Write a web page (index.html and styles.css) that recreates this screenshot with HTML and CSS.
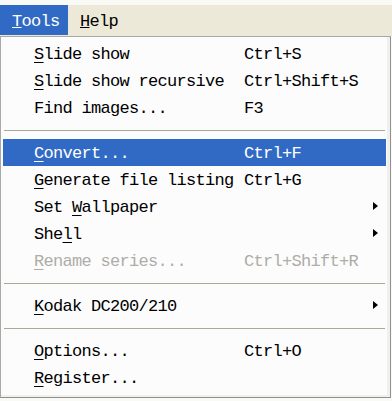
FILE: index.html
```
<!DOCTYPE html>
<html lang="en">
<head>
  <meta charset="UTF-8" />
  <title>Tools menu</title>
  <link rel="stylesheet" href="styles.css">
</head>
<body>
  <div class="menubar">
    <span class="menubar-item open"><u>T</u>ools</span>
    <span class="menubar-item"><u>H</u>elp</span>
  </div>

  <div class="menu">
    <div class="item"><span class="label"><u>S</u>lide show</span><span class="key">Ctrl+S</span></div>
    <div class="item"><span class="label"><u>S</u>lide show recursive</span><span class="key">Ctrl+Shift+S</span></div>
    <div class="item"><span class="label">Find images...</span><span class="key">F3</span></div>
    <div class="sep"></div>
    <div class="item selected"><span class="label"><u>C</u>onvert...</span><span class="key">Ctrl+F</span></div>
    <div class="item"><span class="label"><u>G</u>enerate file listing</span><span class="key">Ctrl+G</span></div>
    <div class="item sub"><span class="label">Set <u>W</u>allpaper</span><span class="key"></span></div>
    <div class="item sub"><span class="label">She<u>l</u>l</span><span class="key"></span></div>
    <div class="item disabled"><span class="label"><u>R</u>ename series...</span><span class="key">Ctrl+Shift+R</span></div>
    <div class="sep"></div>
    <div class="item sub"><span class="label"><u>K</u>odak DC200/210</span><span class="key"></span></div>
    <div class="sep"></div>
    <div class="item"><span class="label"><u>O</u>ptions...</span><span class="key">Ctrl+O</span></div>
    <div class="item"><span class="label"><u>R</u>egister...</span><span class="key"></span></div>
  </div>
</body>
</html>
```

FILE: styles.css
```
* {
  box-sizing: border-box;
  margin: 0;
  padding: 0;
}

body {
  background: #f9f9f6;
  font-family: "Liberation Mono", monospace;
  font-size: 17px;
  letter-spacing: -0.7px;
  color: #000;
  width: 392px;
  height: 401px;
  overflow: hidden;
}

.menubar {
  margin-top: 5px;
  height: 31px;
  background: #ece9d8;
  display: flex;
}

.menubar-item {
  display: flex;
  align-items: center;
  height: 30px;
  padding: 2px 9px 0 12px;
}

.menubar-item.open {
  background: #316ac5;
  color: #fff;
  width: 68px;
}

.menu {
  width: 391px;
  height: 362px;
  background: #fcfcfc;
  border: 1px solid #a8a8a4;
  border-right-color: #8f8f8c;
  border-bottom-color: #8f8f8c;
  box-shadow: inset -3px 0 0 #f0f0ee, inset 0 -2px 0 #f0f0ee;
  padding: 3px 4px 6px 2px;
}

.item {
  display: flex;
  align-items: center;
  height: 27px;
  padding: 2px 0 0 31px;
  position: relative;
}

.item u {
  text-underline-offset: 3px;
}

.label {
  width: 210px;
  white-space: pre;
}

.key {
  white-space: pre;
}

.selected {
  background: #316ac5;
  color: #fff;
}

.disabled {
  color: #aeada8;
}

.sub::after {
  content: '';
  position: absolute;
  left: 370px;
  top: 9px;
  border-left: 5px solid #000;
  border-top: 4.5px solid transparent;
  border-bottom: 4.5px solid transparent;
}

.sep {
  height: 18px;
  display: flex;
  align-items: center;
}

.sep::before {
  content: '';
  flex: 1;
  height: 1px;
  background: #aca899;
  margin: 0 1px;
}
```
